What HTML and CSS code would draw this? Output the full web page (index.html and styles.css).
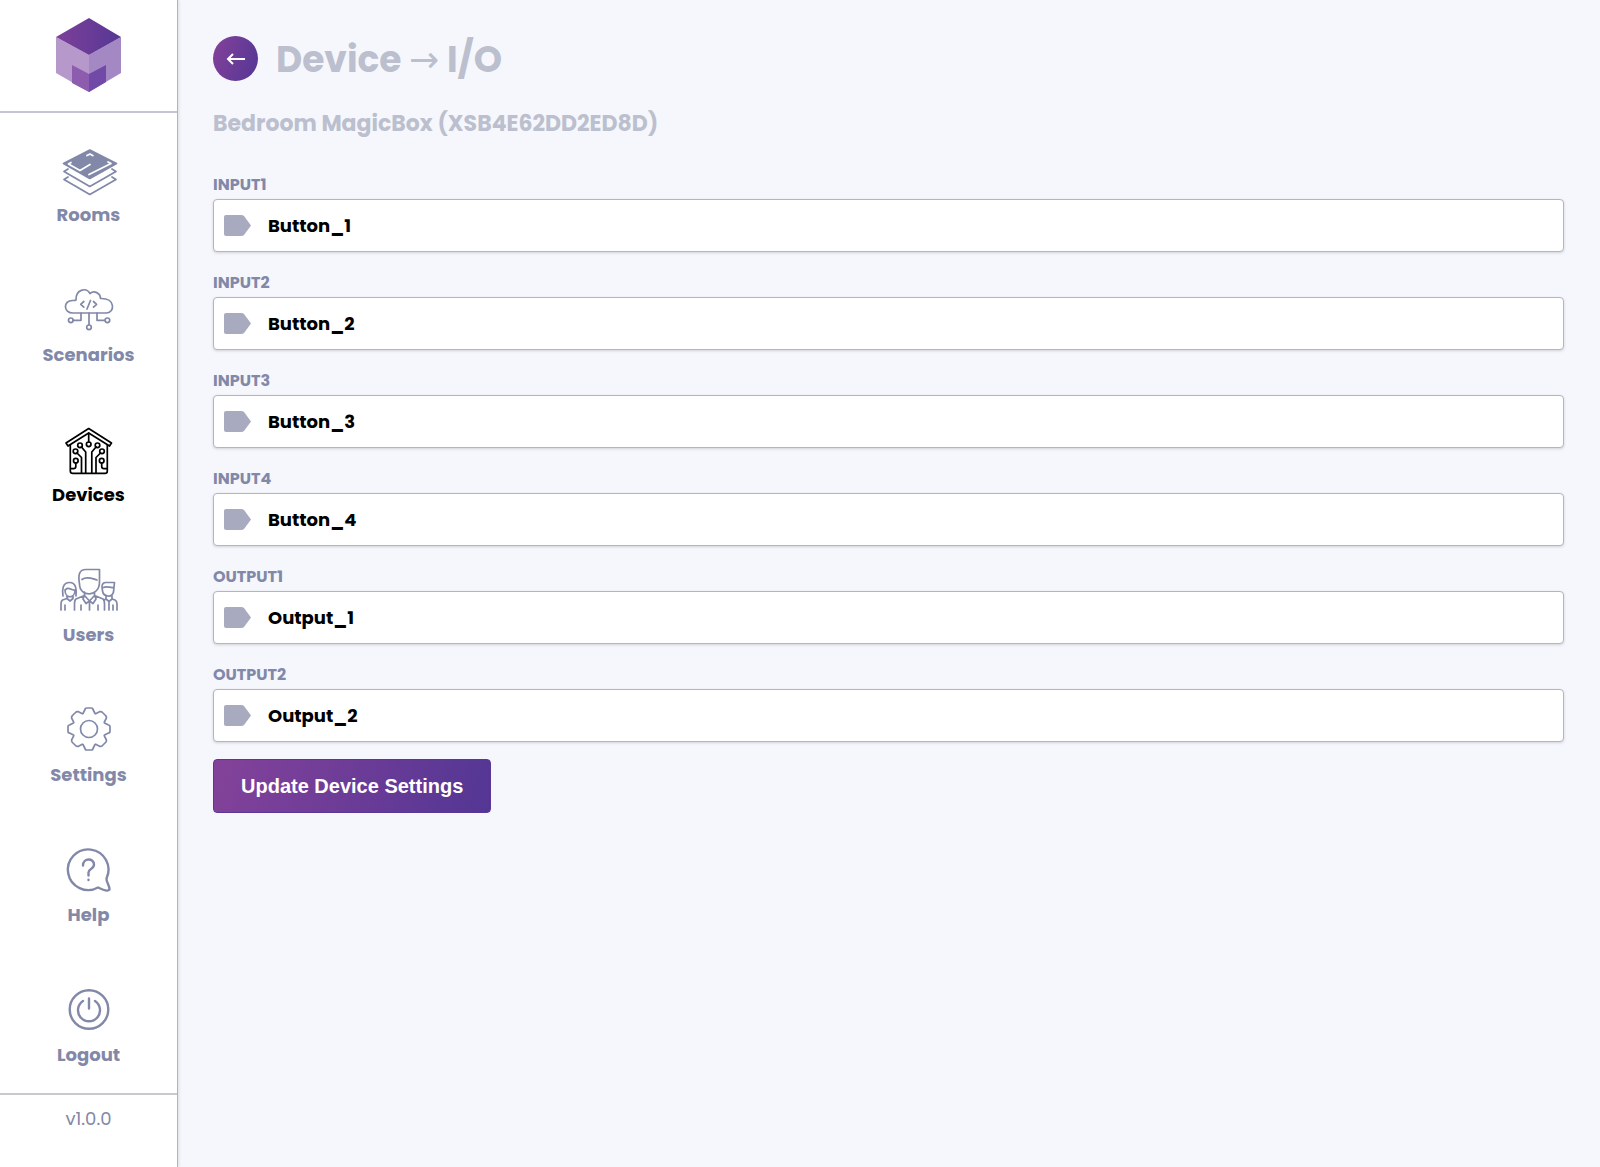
FILE: index.html
```html
<!DOCTYPE html>
<html lang="en">
<head>
    <meta charset="UTF-8">
    <meta name="viewport" content="width=device-width, initial-scale=1.0">
    <title>Device I/O</title>
    <link rel="stylesheet" href="styles.css">
</head>
<body>
    <aside class="sidebar">
        <a href="#" class="logo" aria-label="Home">
            <svg width="66" height="75" viewBox="0 0 66 75">
                <defs>
                    <linearGradient id="cube" x1="0" y1="0" x2="1" y2="0">
                        <stop offset="0" stop-color="#7d4099"/>
                        <stop offset="1" stop-color="#563795"/>
                    </linearGradient>
                </defs>
                <path fill="#b698cb" d="M0 19L33 37V74L0 55z"/>
                <path fill="#a488c4" d="M33 37L65 19V55L33 74z"/>
                <path fill="#8d5cae" d="M16 47L33 56V74L16 65z"/>
                <path fill="#7149a6" d="M33 56L50 47V64L33 74z"/>
                <path fill="url(#cube)" d="M33 0L65 19L33 37L0 19z"/>
            </svg>
        </a>

        <nav class="menu">
            <a href="#" class="menu-item">
                <svg class="icon" viewBox="0 0 60 60">
                    <path d="M9 26L5 28.500L30.800 43.500L57 28.500L53 26M9 34L5 36.500L30.800 51.500L57 36.500L53 34"/>
                    <path class="solid" d="M30.800 7L57.500 20.500L30.800 35.500L4.500 20.500z"/>
                    <path class="cut" d="M28 12.500L31 11L34 12.700M12 19.500L9.500 21L21 27.500L31 21.500M30 31.500L52 20.500L49 19"/>
                </svg>
                Rooms
            </a>
            <a href="#" class="menu-item">
                <svg class="icon" viewBox="0 0 60 60">
                    <path d="M14 30C4 30 4 17.500 13.500 17.500C15 17.500 16 17.600 17 17C16.500 7 27 3.500 31 10.500C35 7 41.500 10 41.500 15.500C57 15 56 30 47 30z"/>
                    <path d="M24.800 18.500L21.700 21.300L24.800 24.200M31.500 17.500L28 26M34.500 18.500L37.600 21.300L34.500 24.200"/>
                    <path d="M30 30V42M22 30V37.300H14M38 30V37.300H46"/>
                    <circle cx="30" cy="44.300" r="2.300"/>
                    <circle cx="11.800" cy="37.300" r="2.300"/>
                    <circle cx="48.400" cy="37.300" r="2.300"/>
                </svg>
                Scenarios
            </a>
            <a href="#" class="menu-item active">
                <svg class="icon" viewBox="0 0 60 60">
                    <path d="M29.700 5.500L7 20L9 23L29.700 10L50.500 23L52.500 20z"/>
                    <path d="M11.300 22V48Q11.300 50.400 14 50.400H46Q48.300 50.400 48.300 48V22M29.700 10V19"/>
                    <path d="M22.500 24L26.700 29V50M37 24L32.800 29V50M18 30L22.500 34.500V50M41.500 30L37 34.500V50M16.800 40V43.500Q16.800 45.700 14.500 45.700H12M42.700 40V43.500Q42.700 45.700 45 45.700H48"/>
                    <circle cx="29.700" cy="21.300" r="2.300"/>
                    <circle cx="21" cy="22.300" r="2.300"/>
                    <circle cx="38.500" cy="22.300" r="2.300"/>
                    <circle cx="16.500" cy="28.300" r="2.300"/>
                    <circle cx="43" cy="28.300" r="2.300"/>
                    <circle cx="16.800" cy="37.700" r="2.300"/>
                    <circle cx="42.700" cy="37.700" r="2.300"/>
                </svg>
                Devices
            </a>
            <a href="#" class="menu-item">
                <svg class="icon" viewBox="0 0 60 60">
                    <!-- middle -->
                    <path d="M20.500 21C19 12 20 6.500 27 6.500H40.500V19C40.500 34.500 20.500 34.500 20.500 21zM23 16.500C28 12.500 34 16 38 17"/>
                    <path d="M25.500 29V32.500L17 36Q15.500 37 15.500 41V47M35.500 29V32.500L44 36Q45.500 37 45.500 41V47M25.500 32.500L30.500 38L35.500 32.500M25.500 32.500L24 36L27 40.500L30.500 38L34 40.500L37 36L35.500 32.500M30.500 38V47M22 42V47M39 42V47"/>
                    <!-- left -->
                    <path d="M4 33C3 27 3.500 19.500 10.500 19.500S17.500 27 17 33M6 27C6 36 16 36 16 27C12 27.500 11 24.500 8 25.500L6 27M8 33V35.500L3.500 37Q2 38 2 41V47M6 42V47M8 35.500L11 38L14 35.500V33"/>
                    <!-- right -->
                    <path d="M43 24C43 20.500 45 19.500 47 19.500H55.500L54.500 29C53 35 44.500 34 43.500 28zM44.500 24.500C48 22.500 51 25 54 24.500M47 33V36L50 38.500L53 36V33M53 36L56 37Q58 38 58 41V47M54 42V47M50 39V47M47 36L45 37"/>
                </svg>
                Users
            </a>
            <a href="#" class="menu-item">
                <svg class="icon" viewBox="-30 -26 60 60">
                    <path d="M-6 -15.500L-4 -19.500Q-4 -21 -2 -21H2Q4 -21 4 -19.500L6 -15.500L6.700 -15.200L11 -17.400Q12.500 -17.700 13.500 -16.500L16.500 -13.500Q17.700 -12.500 17.400 -11L15.200 -6.700L15.500 -6L19.500 -4Q21 -4 21 -2V2Q21 4 19.500 4L15.500 6L15.200 6.700L17.400 11Q17.700 12.500 16.500 13.500L13.500 16.500Q12.500 17.700 11 17.400L6.700 15.200L6 15.500L4 19.500Q4 21 2 21H-2Q-4 21 -4 19.500L-6 15.500L-6.700 15.200L-11 17.400Q-12.500 17.700 -13.500 16.500L-16.500 13.500Q-17.700 12.500 -17.400 11L-15.200 6.700L-15.500 6L-19.500 4Q-21 4 -21 2V-2Q-21 -4 -19.500 -4L-15.500 -6L-15.200 -6.700L-17.400 -11Q-17.700 -12.500 -16.500 -13.500L-13.500 -16.500Q-12.500 -17.700 -11 -17.400L-6.700 -15.200z"/>
                    <circle r="8.500"/>
                </svg>
                Settings
            </a>
            <a href="#" class="menu-item">
                <svg class="icon bold" viewBox="0 0 60 60">
                    <path d="M39 44.500A20.300 20.300 0 1 1 47.500 35.500C47 39 51 43 50.500 46.500C49 48.500 43 46.500 39 44.500z"/>
                    <path d="M24 22.500C24 14.500 35 15 35 21.500C35 26.500 29.500 25.500 29.500 29.500V32.500M29.500 36.800V37"/>
                </svg>
                Help
            </a>
            <a href="#" class="menu-item">
                <svg class="icon bold" viewBox="0 0 60 60">
                    <circle cx="30" cy="26.500" r="19.300"/>
                    <path d="M30 15.500V25.500M24 18A11 11 0 1 0 36 18"/>
                </svg>
                Logout
            </a>
        </nav>

        <div class="version">v1.0.0</div>
    </aside>

    <main class="content">
        <header class="header">
            <button type="button" class="back-btn" aria-label="Back">
                <svg width="20" height="12" viewBox="0 0 20 12">
                    <path d="M19 6H2M7 1L2 6L7 11"/>
                </svg>
            </button>
            <h1>Device <span class="arrow">→</span> I/O</h1>
        </header>
        <h2>Bedroom MagicBox (XSB4E62DD2ED8D)</h2>

        <form>
            <div class="field">
                <label for="input1">INPUT1</label>
                <div class="field-box">
                    <svg class="tag" viewBox="0 0 27 21"><path d="M2 0H17Q19 0 20 1L27 10.500L20 20Q19 21 17 21H2Q0 21 0 19V2Q0 0 2 0z"/></svg>
                    <input type="text" id="input1" value="Button_1">
                </div>
            </div>
            <div class="field">
                <label for="input2">INPUT2</label>
                <div class="field-box">
                    <svg class="tag" viewBox="0 0 27 21"><path d="M2 0H17Q19 0 20 1L27 10.500L20 20Q19 21 17 21H2Q0 21 0 19V2Q0 0 2 0z"/></svg>
                    <input type="text" id="input2" value="Button_2">
                </div>
            </div>
            <div class="field">
                <label for="input3">INPUT3</label>
                <div class="field-box">
                    <svg class="tag" viewBox="0 0 27 21"><path d="M2 0H17Q19 0 20 1L27 10.500L20 20Q19 21 17 21H2Q0 21 0 19V2Q0 0 2 0z"/></svg>
                    <input type="text" id="input3" value="Button_3">
                </div>
            </div>
            <div class="field">
                <label for="input4">INPUT4</label>
                <div class="field-box">
                    <svg class="tag" viewBox="0 0 27 21"><path d="M2 0H17Q19 0 20 1L27 10.500L20 20Q19 21 17 21H2Q0 21 0 19V2Q0 0 2 0z"/></svg>
                    <input type="text" id="input4" value="Button_4">
                </div>
            </div>
            <div class="field">
                <label for="output1">OUTPUT1</label>
                <div class="field-box">
                    <svg class="tag" viewBox="0 0 27 21"><path d="M2 0H17Q19 0 20 1L27 10.500L20 20Q19 21 17 21H2Q0 21 0 19V2Q0 0 2 0z"/></svg>
                    <input type="text" id="output1" value="Output_1">
                </div>
            </div>
            <div class="field">
                <label for="output2">OUTPUT2</label>
                <div class="field-box">
                    <svg class="tag" viewBox="0 0 27 21"><path d="M2 0H17Q19 0 20 1L27 10.500L20 20Q19 21 17 21H2Q0 21 0 19V2Q0 0 2 0z"/></svg>
                    <input type="text" id="output2" value="Output_2">
                </div>
            </div>
            <button type="submit" class="submit-btn">Update Device Settings</button>
        </form>
    </main>
</body>
</html>
```
FILE: styles.css
```css
* {
    margin: 0;
    padding: 0;
    box-sizing: border-box;
}

body {
    display: flex;
    min-height: 100vh;
    background: #f5f7fc;
    font-family: Poppins, Inter, sans-serif;
    color: #8288a8;
}

.sidebar {
    flex: none;
    display: flex;
    flex-direction: column;
    width: 178px;
    background: #fff;
    border-right: 1px solid #b3b3bb;
    box-shadow: 1px 0 3px rgba(0, 0, 0, 0.1);
}

.logo {
    display: flex;
    justify-content: center;
    padding: 18px 0;
    border-bottom: 2px solid #c4c4d2;
}

.menu-item {
    display: flex;
    flex-direction: column;
    align-items: center;
    height: 140px;
    padding-top: 30px;
    font-size: 18px;
    line-height: 24px;
    font-weight: 700;
    color: inherit;
    text-decoration: none;
}

.menu-item.active {
    color: #000;
}

.icon {
    width: 60px;
    height: 60px;
    fill: none;
    stroke: currentColor;
    stroke-width: 1.7;
    stroke-linecap: round;
    stroke-linejoin: round;
}

.icon.bold {
    stroke-width: 2.4;
}

.icon .solid {
    fill: currentColor;
}

.icon .cut {
    stroke: #fff;
}

.version {
    flex: 1;
    padding-top: 12px;
    border-top: 2px solid #c8c8cd;
    font-size: 18px;
    line-height: 24px;
    text-align: center;
}

.content {
    flex: 1;
    padding: 36px 36px 36px 35px;
}

.header {
    display: flex;
    align-items: flex-start;
    gap: 18px;
}

.back-btn {
    display: flex;
    align-items: center;
    justify-content: center;
    width: 45px;
    height: 45px;
    border: none;
    border-radius: 50%;
    background: linear-gradient(110deg, #84429a, #533694);
    cursor: pointer;
}

.back-btn svg {
    fill: none;
    stroke: #fff;
    stroke-width: 2;
}

h1 {
    font-size: 36px;
    line-height: 48px;
    font-weight: 700;
    color: #bbbfce;
}

.arrow {
    font-family: "DejaVu Sans", sans-serif;
    font-weight: 400;
}

h2 {
    margin: 24px 0 35px;
    font-size: 22px;
    line-height: 32px;
    font-weight: 700;
    color: #bbbfce;
}

.field + .field {
    margin-top: 21px;
}

.field label {
    display: block;
    margin-bottom: 4px;
    font-size: 16px;
    line-height: 20px;
    font-weight: 700;
}

.field-box {
    display: flex;
    align-items: center;
    gap: 17px;
    height: 53px;
    padding: 0 10px;
    background: #fff;
    border: 1px solid #b3b5c3;
    border-radius: 4px;
    box-shadow: 0 1px 3px rgba(0, 0, 0, 0.15);
}

.tag {
    flex: none;
    width: 27px;
    height: 21px;
    fill: #a8abc0;
}

.field-box input {
    flex: 1;
    min-width: 0;
    height: 100%;
    border: none;
    outline: none;
    background: none;
    font-family: inherit;
    font-size: 18px;
    font-weight: 700;
    color: #000;
}

.submit-btn {
    margin-top: 17px;
    padding: 0 27px;
    height: 54px;
    border: 1px solid #5b3796;
    border-radius: 4px;
    background: linear-gradient(110deg, #84429a, #533694);
    font-family: "Liberation Sans", Arial, sans-serif;
    font-size: 20px;
    font-weight: 700;
    color: #fff;
    cursor: pointer;
}
```
